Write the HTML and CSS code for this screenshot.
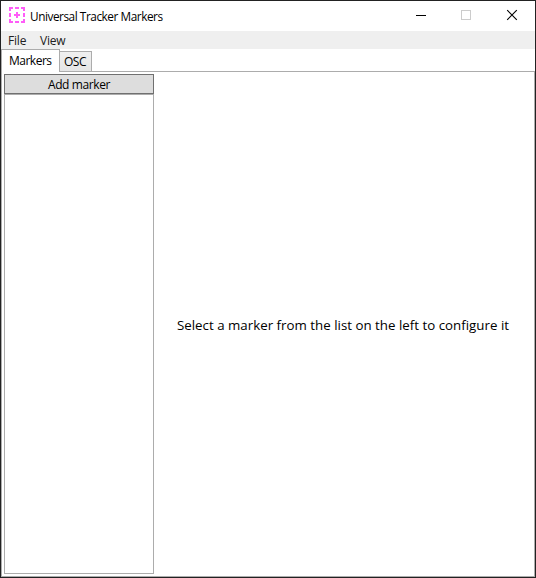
FILE: index.html
```html
<!DOCTYPE html>
<html lang="en">
<head>
<meta charset="utf-8">
<title>Universal Tracker Markers</title>
<link rel="stylesheet" href="styles.css">
</head>
<body>
<div class="window">
  <header class="titlebar">
    <svg class="app-icon" width="16" height="16" viewBox="0 0 16 16" fill="#ff5cf8" shape-rendering="crispEdges">
      <path d="M0 0h4v2H2v2H0zM6 0h4v2H6zM12 0h4v4h-2V2h-2zM0 6h2v4H0zM14 6h2v4h-2zM0 12h2v2h2v2H0zM6 14h4v2H6zM14 12h2v4h-4v-2h2zM7 5h2v2h2v2H9v2H7V9H5V7h2z"/>
    </svg>
    <span class="title">Universal Tracker Markers</span>
    <div class="controls">
      <svg width="46" height="30" viewBox="0 0 46 30" shape-rendering="crispEdges"><path d="M18 14.5h10" stroke="#000"/></svg>
      <svg width="46" height="30" viewBox="0 0 46 30" shape-rendering="crispEdges"><path d="M17.500 9.500h9v9h-9z" fill="none" stroke="#ccc"/></svg>
      <svg width="46" height="30" viewBox="0 0 46 30"><path d="M17.200 9.200l9.600 9.600M26.800 9.200l-9.600 9.600" stroke="#000" stroke-width="1.150"/></svg>
    </div>
  </header>
  <nav class="menu"><span class="file">File</span><span class="view">View</span></nav>
  <div class="tabs">
    <div class="tab active"><span class="markers">Markers</span></div>
    <div class="tab"><span class="osc">OSC</span></div>
  </div>
  <main class="panel">
    <aside class="sidebar">
      <button class="add"><span>Add marker</span></button>
      <div class="list"></div>
    </aside>
    <section class="detail"><p class="hint">Select a marker from the list on the left to configure it</p></section>
  </main>
</div>
</body>
</html>
```
FILE: styles.css
```css
* { box-sizing: border-box; }
body { margin: 0; font-family: "Open Sans", "Noto Sans", sans-serif; font-size: 12px; color: #000; background: #fff; }
.window { width: 536px; height: 578px; border: 1px solid #222; display: flex; flex-direction: column; background: #fff; }
.titlebar { height: 30px; flex: none; display: flex; align-items: center; padding-left: 8px; }
.app-icon { margin-right: 5px; position: relative; top: -1px; }
.title { font-size: 11.800px; letter-spacing: -0.45px; white-space: nowrap; }
.controls { display: flex; margin-left: auto; margin-right: -1px; }
.menu { height: 18px; flex: none; background: #efefef; display: flex; align-items: center; padding-left: 7px; color: #212121; line-height: 18px; }
.file { width: 32px; padding-top: 2px; letter-spacing: -0.2px; }
.view { padding-top: 2px; letter-spacing: -0.2px; }
.tabs { height: 23px; flex: none; display: flex; align-items: flex-end; margin-bottom: -1px; position: relative; z-index: 1; }
.tab { width: 33px; height: 21px; margin-left: -1px; border: 1px solid #acacac; background: linear-gradient(#f0f0f0, #e5e5e5); line-height: 19px; padding-left: 4px; white-space: nowrap; }
.tab.active { width: 59px; height: 23px; margin-left: 0; background: #fff; border-bottom: 0; padding-left: 7px; line-height: 22px; z-index: 1; }
.markers { letter-spacing: -0.5px; }
.osc { letter-spacing: -0.5px; }
.panel { flex: 1; min-height: 0; border: 1px solid #acacac; padding: 2px; display: flex; }
.sidebar { width: 150px; flex: none; display: flex; flex-direction: column; }
.add { height: 20px; flex: none; padding: 0; border: 1px solid #707070; border-radius: 0; background: #ddd; color: #000; font: inherit; line-height: 19px; letter-spacing: -0.4px; }
.list { flex: 1; border: 1px solid #acacac; }
.detail { flex: 1; display: flex; align-items: center; justify-content: center; padding-top: 1px; }
.hint { margin: 0; font-size: 13.300px; letter-spacing: 0.01px; white-space: nowrap; }
```
